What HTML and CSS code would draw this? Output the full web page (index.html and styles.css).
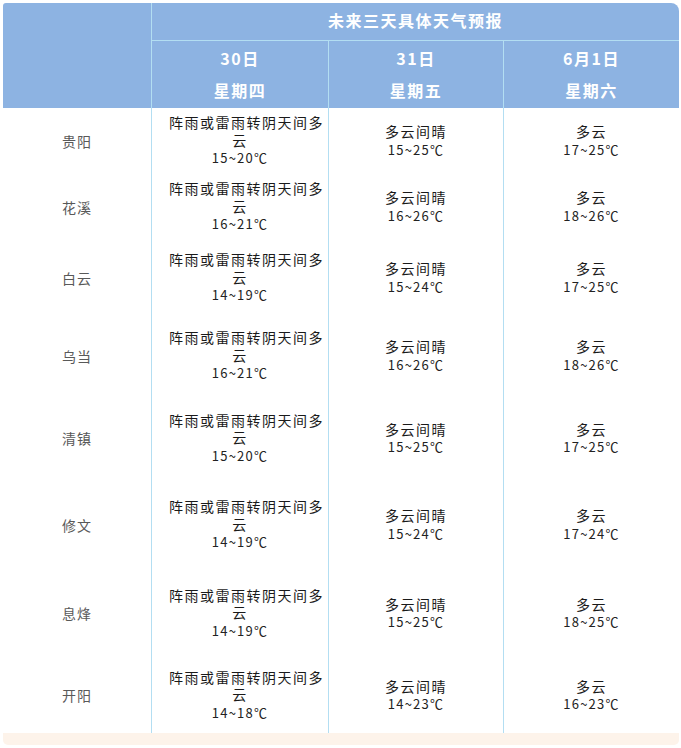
FILE: index.html
```html
<!DOCTYPE html>
<html lang="zh">
<head>
<meta charset="utf-8">
<title>未来三天具体天气预报</title>
<link rel="stylesheet" href="styles.css">
</head>
<body>
<div class="card">
  <div class="head">
    <div class="corner"></div>
    <div class="title">未来三天具体天气预报</div>
    <div class="day d1"><span>30日</span><span>星期四</span></div>
    <div class="day"><span>31日</span><span>星期五</span></div>
    <div class="day"><span>6月1日</span><span>星期六</span></div>
  </div>
  <div class="body">
    <div class="row r1">
      <div class="city">贵阳</div>
      <div class="cell"><p class="long">阵雨或雷雨转阴天间多云</p><p class="t">15~20℃</p></div>
      <div class="cell"><p>多云间晴</p><p class="t">15~25℃</p></div>
      <div class="cell"><p>多云</p><p class="t">17~25℃</p></div>
    </div>
    <div class="row r2">
      <div class="city">花溪</div>
      <div class="cell"><p class="long">阵雨或雷雨转阴天间多云</p><p class="t">16~21℃</p></div>
      <div class="cell"><p>多云间晴</p><p class="t">16~26℃</p></div>
      <div class="cell"><p>多云</p><p class="t">18~26℃</p></div>
    </div>
    <div class="row r3">
      <div class="city">白云</div>
      <div class="cell"><p class="long">阵雨或雷雨转阴天间多云</p><p class="t">14~19℃</p></div>
      <div class="cell"><p>多云间晴</p><p class="t">15~24℃</p></div>
      <div class="cell"><p>多云</p><p class="t">17~25℃</p></div>
    </div>
    <div class="row r4">
      <div class="city">乌当</div>
      <div class="cell"><p class="long">阵雨或雷雨转阴天间多云</p><p class="t">16~21℃</p></div>
      <div class="cell"><p>多云间晴</p><p class="t">16~26℃</p></div>
      <div class="cell"><p>多云</p><p class="t">18~26℃</p></div>
    </div>
    <div class="row r5">
      <div class="city">清镇</div>
      <div class="cell"><p class="long">阵雨或雷雨转阴天间多云</p><p class="t">15~20℃</p></div>
      <div class="cell"><p>多云间晴</p><p class="t">15~25℃</p></div>
      <div class="cell"><p>多云</p><p class="t">17~25℃</p></div>
    </div>
    <div class="row r6">
      <div class="city">修文</div>
      <div class="cell"><p class="long">阵雨或雷雨转阴天间多云</p><p class="t">14~19℃</p></div>
      <div class="cell"><p>多云间晴</p><p class="t">15~24℃</p></div>
      <div class="cell"><p>多云</p><p class="t">17~24℃</p></div>
    </div>
    <div class="row r7">
      <div class="city">息烽</div>
      <div class="cell"><p class="long">阵雨或雷雨转阴天间多云</p><p class="t">14~19℃</p></div>
      <div class="cell"><p>多云间晴</p><p class="t">15~25℃</p></div>
      <div class="cell"><p>多云</p><p class="t">18~25℃</p></div>
    </div>
    <div class="row r8">
      <div class="city">开阳</div>
      <div class="cell"><p class="long">阵雨或雷雨转阴天间多云</p><p class="t">14~18℃</p></div>
      <div class="cell"><p>多云间晴</p><p class="t">14~23℃</p></div>
      <div class="cell"><p>多云</p><p class="t">16~23℃</p></div>
    </div>
  </div>
  <div class="foot"></div>
</div>
</body>
</html>
```

FILE: styles.css
```css
html, body {
  margin: 0;
  padding: 0;
  background: #ffffff;
}
body {
  padding: 3px 2px 0 3px;
  font-family: "Noto Sans CJK SC", "Noto Sans", sans-serif;
}
.card {
  width: 676px;
}
.head {
  display: grid;
  grid-template-columns: 148px 177px 175px 176px;
  grid-template-rows: 38px 67px;
  background: #8db3e2;
  border-radius: 3px 8px 0 0;
  color: #ffffff;
  font-weight: bold;
  font-size: 16px;
  letter-spacing: 1.5px;
}
.corner {
  grid-row: 1 / 3;
}
.title {
  grid-column: 2 / 5;
  border-left: 1px solid #b3def2;
  border-bottom: 1px solid #b3def2;
  display: flex;
  align-items: center;
  justify-content: center;
  padding-bottom: 3px;
}
.day {
  border-left: 1px solid #b3def2;
  display: flex;
  flex-direction: column;
  align-items: center;
  line-height: 32px;
  padding-top: 1px;
}
.row {
  display: grid;
  grid-template-columns: 148px 177px 175px 176px;
}
.r1 { height: 65px; }
.r2 { height: 67px; }
.r3 { height: 75px; }
.r4 { height: 81px; }
.r5 { height: 84px; }
.r6 { height: 89px; }
.r7 { height: 88px; }
.r8 { height: 76px; }
.city {
  display: flex;
  align-items: center;
  justify-content: center;
  font-size: 14px;
  letter-spacing: 1px;
  color: #595959;
}
.cell {
  border-left: 1px solid #b3def2;
  display: flex;
  flex-direction: column;
  align-items: center;
  justify-content: center;
  text-align: center;
  padding: 0 4px;
  color: #1a1a1a;
}
.cell p {
  margin: 0;
  font-size: 14px;
  line-height: 17.5px;
  letter-spacing: 1.5px;
}
.cell p.long {
  text-indent: 13px;
}
.cell p.t {
  font-size: 13px;
  letter-spacing: 1.2px;
  color: #222222;
}
.foot {
  height: 12px;
  background: #fdf3ea;
  border-radius: 0 0 5px 5px;
}
```
